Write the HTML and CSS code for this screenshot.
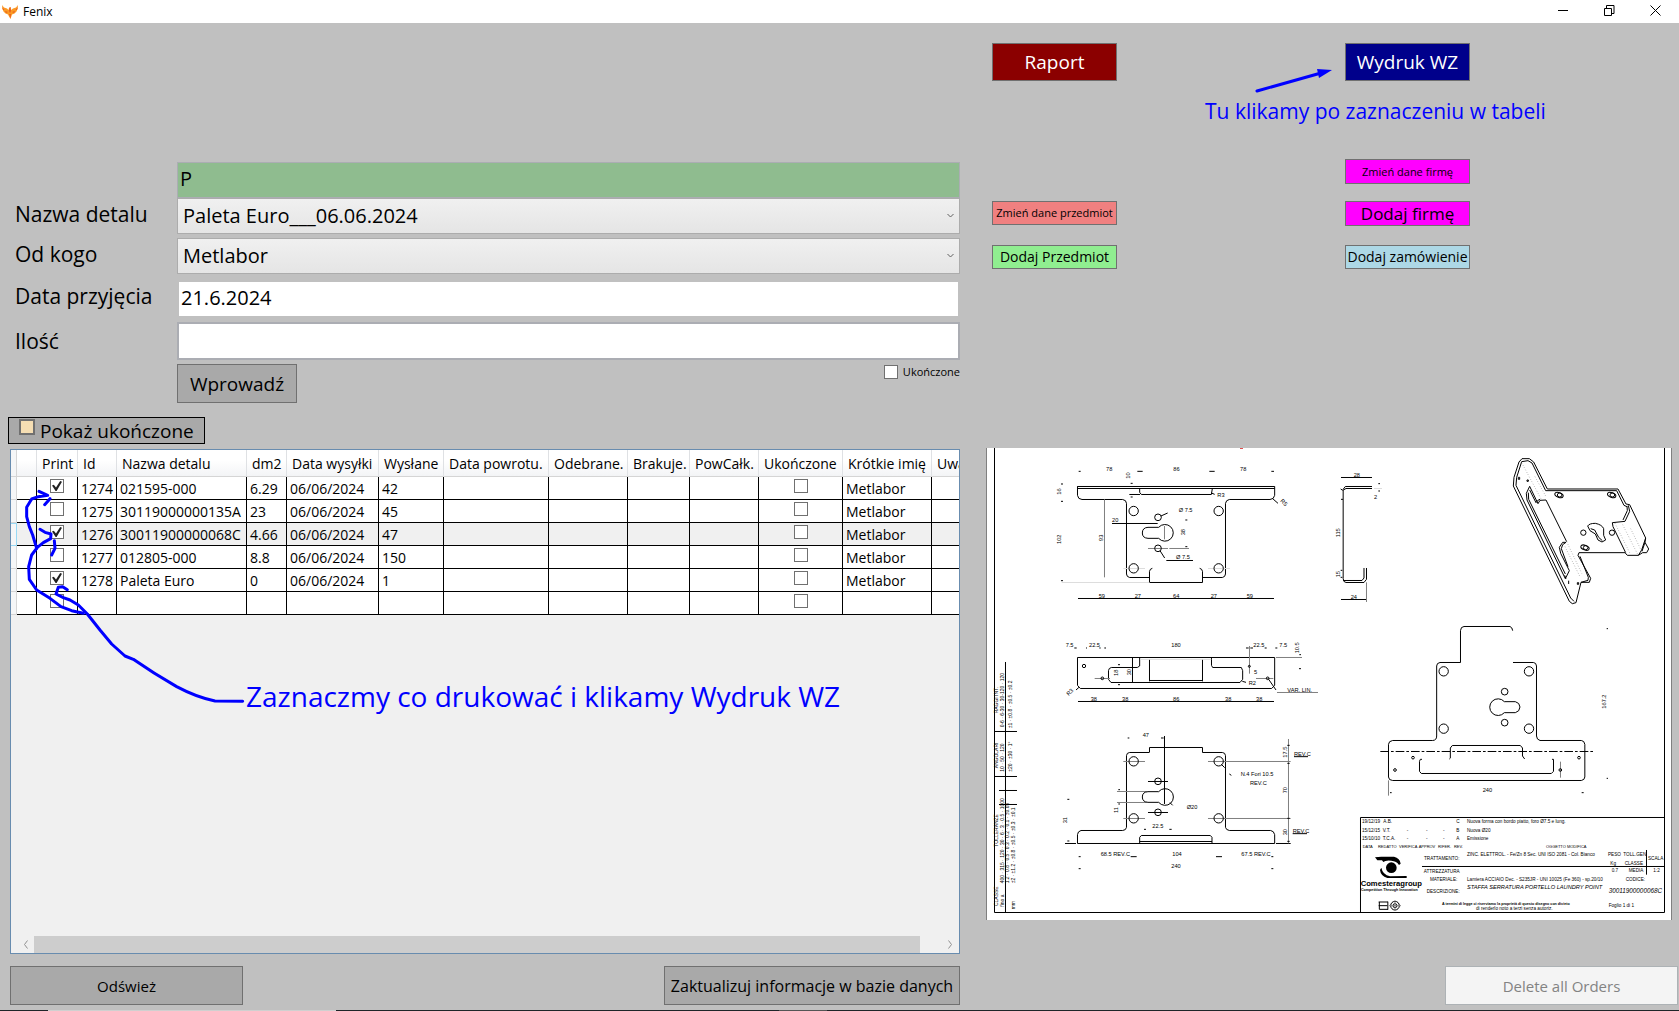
FILE: index.html
```html
<!DOCTYPE html>
<html lang="pl">
<head>
<meta charset="utf-8">
<title>Fenix</title>
<link rel="stylesheet" href="styles.css">
</head>
<body>
<header class="titlebar">
  <svg class="logo" viewBox="0 0 16 14" aria-hidden="true">
    <path fill="#fb9a24" d="M0 0L2 2.500 5 3.500 6.500 5 7 3 8.500 2 9 5 11 3.500 14 2.500 16 0 15.500 4 14.500 6.500 12.500 8.500 10 9.500 9.500 11 8.500 14 7 11.500 6 9.500 3.500 8.500 1.500 6.500.5 4z"/>
    <path fill="#ea5f1c" d="M0 2l2.500 3L1 5zM16 2l-2.500 3L15 5zM3 6l3 1-2 1zM13 6l-3 1 2 1zM7.500 2.500l1-.5.5 4-1 2-1-2zM7 9h2l-.5 4.500z"/>
  </svg>
  <span class="title">Fenix</span>
  <div class="winbuttons">
    <button class="win" aria-label="Minimalizuj"><svg viewBox="0 0 11 11"><path d="M0 5.500h10"/></svg></button>
    <button class="win" aria-label="Przywróć"><svg viewBox="0 0 11 11"><path d="M.5 3.500h7v7h-7zM2.500 3V.5h7.500v8h-2"/></svg></button>
    <button class="win" aria-label="Zamknij"><svg viewBox="0 0 11 11"><path d="M.5.5l10 10M10.500.5l-10 10"/></svg></button>
  </div>
</header>

<main class="content">
  <section class="left">
    <form class="form">
      <div class="pair">
        <div class="row"><span></span><input class="field search" aria-label="Szukaj" value="P"></div>
        <div class="row">
          <label for="detal">Nazwa detalu</label>
          <div class="combo"><select id="detal"><option>Paleta Euro___06.06.2024</option></select><svg viewBox="0 0 7 5"><path d="M.5 1l3 3 3-3"/></svg></div>
        </div>
      </div>
      <div class="row">
        <label for="firma">Od kogo</label>
        <div class="combo"><select id="firma"><option>Metlabor</option></select><svg viewBox="0 0 7 5"><path d="M.5 1l3 3 3-3"/></svg></div>
      </div>
      <div class="row received"><label for="data">Data przyjęcia</label><input class="field date" id="data" value="21.6.2024"></div>
      <div class="row quantity"><label for="ilosc">Ilość</label><input class="field amount" id="ilosc"></div>
      <div class="row">
        <span></span>
        <div class="submit">
          <button type="button" class="btn enter">Wprowadź</button>
          <label class="done"><input type="checkbox">Ukończone</label>
        </div>
      </div>
    </form>

    <label class="toggle"><input type="checkbox">Pokaż ukończone</label>

    <div class="gridbox">
      <div class="scroller">
        <table>
          <colgroup><col class="c6"><col class="c20"><col class="c41"><col class="c39"><col class="c130"><col class="c40"><col class="c92"><col class="c65"><col class="c105"><col class="c79"><col class="c62"><col class="c69"><col class="c84"><col class="c89"><col class="c79"></colgroup>
          <thead><tr><th class="rh"></th><th></th><th>Print</th><th>Id</th><th>Nazwa detalu</th><th>dm2</th><th>Data wysyłki</th><th>Wysłane</th><th>Data powrotu.</th><th>Odebrane.</th><th>Brakuje.</th><th>PowCałk.</th><th>Ukończone</th><th>Krótkie imię</th><th>Uwagi</th></tr></thead>
          <tbody>
            <tr><td class="rh"></td><td></td><td class="ck"><input type="checkbox" aria-label="Print 1274" checked></td><td>1274</td><td>021595-000</td><td>6.29</td><td>06/06/2024</td><td>42</td><td></td><td></td><td></td><td></td><td class="ck"><input type="checkbox" aria-label="Ukończone 1274"></td><td>Metlabor</td><td></td></tr>
            <tr><td class="rh"></td><td></td><td class="ck"><input type="checkbox" aria-label="Print 1275"></td><td>1275</td><td>30119000000135A</td><td>23</td><td>06/06/2024</td><td>45</td><td></td><td></td><td></td><td></td><td class="ck"><input type="checkbox" aria-label="Ukończone 1275"></td><td>Metlabor</td><td></td></tr>
            <tr class="current"><td class="rh"></td><td></td><td class="ck"><input type="checkbox" aria-label="Print 1276" checked></td><td>1276</td><td>30011900000068C</td><td>4.66</td><td>06/06/2024</td><td>47</td><td></td><td></td><td></td><td></td><td class="ck"><input type="checkbox" aria-label="Ukończone 1276"></td><td>Metlabor</td><td></td></tr>
            <tr><td class="rh"></td><td></td><td class="ck"><input type="checkbox" aria-label="Print 1277"></td><td>1277</td><td>012805-000</td><td>8.8</td><td>06/06/2024</td><td>150</td><td></td><td></td><td></td><td></td><td class="ck"><input type="checkbox" aria-label="Ukończone 1277"></td><td>Metlabor</td><td></td></tr>
            <tr><td class="rh"></td><td></td><td class="ck"><input type="checkbox" aria-label="Print 1278" checked></td><td>1278</td><td>Paleta Euro</td><td>0</td><td>06/06/2024</td><td>1</td><td></td><td></td><td></td><td></td><td class="ck"><input type="checkbox" aria-label="Ukończone 1278"></td><td>Metlabor</td><td></td></tr>
            <tr><td class="rh"></td><td></td><td class="ck"><input type="checkbox" aria-label="Print nowy"></td><td></td><td></td><td></td><td></td><td></td><td></td><td></td><td></td><td></td><td class="ck"><input type="checkbox" aria-label="Ukończone nowy"></td><td></td><td></td></tr>
          </tbody>
        </table>
      </div>
      <div class="scrollbar"><svg viewBox="0 0 5 9"><path d="M4.500.5l-3 4 3 4"/></svg><div class="thumb"></div><svg viewBox="0 0 5 9"><path d="M.5.5l3 4-3 4"/></svg></div>
      <svg class="scribble" viewBox="10 449 240 270" aria-hidden="true">
        <g transform="translate(0 300) scale(.33333)">
          <path d="M728 1204L645 1203Q590 1192 530 1160Q460 1120 400 1078L375 1068L335 1032L300 990L262 942L235 915L210 900L190 893L168 882L175 862L188 860L202 869"/>
          <path d="M250 940L215 932L183 920L150 895L110 870L88 838L86 800L95 765L112 742L130 728L152 716L153 702L135 697L120 688M163 722L165 745L155 765"/>
          <path d="M110 745L98 705L88 680L80 650L80 622L95 597L115 590L143 586L117 574M150 596L134 614"/>
        </g>
      </svg>
      <p class="note big">Zaznaczmy co drukować i klikamy Wydruk WZ</p>
    </div>

    <div class="footer">
      <button class="btn refresh">Odśwież</button>
      <button class="btn update">Zaktualizuj informacje w bazie danych</button>
    </div>
  </section>

  <section class="right">
    <div class="tools">
      <button class="tool raport">Raport</button>
      <button class="tool wydruk">Wydruk WZ</button>
      <button class="tool firm small">Zmień dane firmę</button>
      <button class="tool item small">Zmień dane przedmiot</button>
      <button class="tool firm large">Dodaj firmę</button>
      <button class="tool additem">Dodaj Przedmiot</button>
      <button class="tool order">Dodaj zamówienie</button>
      <svg class="arrow" viewBox="0 0 80 26" aria-hidden="true"><path d="M2 23L66 5" fill="none" stroke="#00f" stroke-width="3" stroke-linecap="round"/><path d="M62 1L77 2L64 10z" fill="#00f"/></svg>
      <p class="note">Tu klikamy po zaznaczeniu w tabeli</p>
    </div>

    <svg class="drawing" viewBox="986 448 686 472" role="img" aria-label="Rysunek techniczny">
      <rect x="986" y="448" width="686" height="472" fill="#fff"/>
      <path class="edge" d="M986.500 448V920M1671.500 448V920"/>
      <path d="M1240 448.500h3" stroke="#e05050"/>
      <path class="ln" d="M994.500 448V912.500H1664.500V448"/>

      <!-- top view -->
      <g class="d" transform="translate(980 440) scale(.33333)">
        <path d="M292 139.500H884M292 145.500H884M292.500 139V166Q294 178 306 178.500H428Q439 180 439.500 190V402Q440 411 449 412.500H508M884 139V166Q882 178 870 178.500H748Q738 180 736.500 190V402Q736 411 727 412.500H668M508 427.500H667.500V394Q666 386 659 385M508.500 427V394Q510 386 517 385M479 146V157L484 163.500H694L697 146"/>
        <path d="M294 475.500H882M396 250.500H533M559 361.500H639M448 163.500H480"/>
        <path d="M373.500 178V412M553.500 258V298M504 325.500H564M568 325.500H627" class="g"/>
        <path d="M245 427.500H508M430 385.500H495M684 385.500H750" class="l"/>
        <circle cx="461" cy="213" r="14"/><circle cx="716" cy="213" r="14"/><circle cx="461" cy="385" r="14"/><circle cx="716" cy="385" r="14"/><circle cx="534" cy="232" r="10"/><circle cx="534" cy="325" r="10"/>
        <path d="M536 262H504Q487 263 487 279Q487 294 504 295H536A25 25 0 1 0 536 262"/>
        <path d="M296 94h6M472 94h16M688 94h16M874 94h8M243 132h6M243 184h6M243 422h6M452 130h6M452 171h6M616 240h6M616 320h6M694 159l10 4M878 176l16 14M543 228l20-9M540 332l14 22"/>
        <g class="t"><text x="378" y="94">78</text><text x="580" y="94">86</text><text x="780" y="94">78</text><text x="712" y="170">R3</text><text x="596" y="217">Ø 7.5</text><text x="396" y="247">20</text><text x="588" y="358">Ø 7.5</text><text x="356" y="473">59</text><text x="464" y="473">27</text><text x="579" y="473">64</text><text x="692" y="473">27</text><text x="800" y="473">59</text>
        <text transform="translate(450 116) rotate(-90)">10</text><text transform="translate(243 164) rotate(-90)">16</text><text transform="translate(244 312) rotate(-90)">102</text><text transform="translate(370 303) rotate(-90)">93</text><text transform="translate(615 286) rotate(-90)">38</text><text transform="translate(900 184) rotate(45)">R5</text></g>

        <!-- side profile -->
        <path d="M292.500 736V652.500H884V736L875 745.500H301Z"/>
        <path d="M479 654V678L472 682.500H394Q386 684 385.500 692V718L393 727.500H780L788 718V692L784 682.500H698L694.500 676V654M508.500 658V724M667.500 658V724M508 721.500H667M457.500 653V727M294 784.500H882"/>
        <path class="g" d="M344 715.500H390M828 715.500H880M808.500 618V701M888 652.500H966M891 757.500H1014"/>
        <path class="l" d="M480 658H694"/>
        <circle cx="312" cy="678" r="5"/><circle cx="367" cy="715" r="4"/><circle cx="808" cy="679" r="3"/><circle cx="863" cy="715" r="4"/>
        <path d="M283 624h7M318 624h3M358 624h4M373 624h5M798 624h8M811 624h8M854 624h6M886 624h6M958 644h5M957 686h6M414 674h6M414 734h6M787 724l11 3M866 718l22 32M297 742l-9 8"/>
        <g class="t"><text x="257" y="622">7.5</text><text x="327" y="622">22.5</text><text x="574" y="622">180</text><text x="820" y="622">22.5</text><text x="898" y="622">7.5</text><text x="332" y="783">38</text><text x="426" y="783">38</text><text x="579" y="783">86</text><text x="735" y="783">38</text><text x="828" y="783">38</text><text x="922" y="755">VAR. LIN.</text><text x="822" y="702">5</text><text transform="translate(957 640) rotate(-90)">10.5</text><text transform="translate(414 708) rotate(-90)">18</text><text transform="translate(453 706) rotate(-90)">30</text><text transform="translate(266 768) rotate(-45)">R3</text><text x="806" y="736">R2</text></g>
      </g>

      <!-- bottom view and tolerance strip -->
      <g class="d" transform="translate(980 640) scale(.33333)">
        <path d="M76.500 66V816M43 274.500H111M43 409.500H111M57 451.500H111M57 493.500H111"/>
        <g class="t strip">
          <text transform="translate(54 220) rotate(-90)">RAGGI INT.</text><text transform="translate(54 385) rotate(-90)">ANGOLARI</text><text transform="translate(54 620) rotate(-90)">TOLLERANZE</text><text transform="translate(54 798) rotate(-90)">CLASSE</text>
          <text transform="translate(71 262) rotate(-90)">0-6 · 6-30 · 30-120 · 120</text><text transform="translate(97 265) rotate(-90)">±1 · ±0.8 · ±0.5 · ±0.2</text>
          <text transform="translate(71 395) rotate(-90)">10 · 50 · 120</text><text transform="translate(97 395) rotate(-90)">±20 · ±30 · 1°</text>
          <text transform="translate(71 730) rotate(-90)">400 · 315 · 120 · 30 · 6 · 3 · 0.5 · 1000</text><text transform="translate(88 730) rotate(-90)">1.2 · 0.8 · 0.5 · 0.3 · 0.2 · 0.1 · ±0.05</text><text transform="translate(105 730) rotate(-90)">±2 · ±1.2 · ±0.8 · ±0.5 · ±0.3 · ±0.1</text>
          <text transform="translate(71 800) rotate(-90)">fino a</text><text transform="translate(104 808) rotate(-90)">mm</text>
        </g>
        <path d="M508 337.500H449Q440 338 439.500 347V562Q438 571 428 571.500H303Q293 574 292.500 584V610.500H884V584Q882 573 872 571.500H748Q738 570 736.500 562V347Q736 338 727 337.500H667.500V322.500H508.500V337M479 610V592L484 586.500H691L696 592V610M479 604.500H696M553.500 288V492M504 424.500H564M504 517.500H564M255 610.500H288M888 610.500H932"/>
        <path class="g" d="M430 364.500H495M684 364.500H932M430 535.500H495M684 535.500H932M411 454.500H500M411 487.500H500M925.500 297V610"/>
        <circle cx="461" cy="364" r="14"/><circle cx="716" cy="364" r="14"/><circle cx="461" cy="535" r="14"/><circle cx="716" cy="535" r="14"/><circle cx="534" cy="424" r="10"/><circle cx="534" cy="517" r="10"/>
        <path d="M536 455H504Q487 456 487 471Q487 486 504 487H536A25 25 0 1 0 536 455M724 373l10 10M748 402l6 4M570 488l8 8"/>
        <path d="M443 294h5M543 294h8M415 449h5M415 492h5M262 478h6M262 603h6M492 568h6M568 568h7M296 650h6M452 650h18M708 650h18M874 650h6M296 686h6M874 686h6M942 350H984M938 581H981M922 316h7M922 370h7M922 535h7M922 604h7"/>
        <g class="t"><text x="488" y="291">47</text><text x="620" y="508">Ø20</text><text x="517" y="564">22.5</text><text x="362" y="648">68.5 REV.C</text><text x="577" y="648">104</text><text x="784" y="648">67.5 REV.C</text><text x="574" y="685">240</text><text x="942" y="348">REV.C</text><text x="938" y="580">REV.C</text><text x="782" y="408">N.4 Fori 10.5</text><text x="810" y="435">REV.C</text><text transform="translate(414 519) rotate(-90)">11</text><text transform="translate(262 550) rotate(-90)">31</text><text transform="translate(922 353) rotate(-90)">17.5</text><text transform="translate(922 460) rotate(-90)">70</text><text transform="translate(922 586) rotate(-90)">30</text></g>
      </g>

      <!-- profile, isometric view and flat pattern -->
      <g class="d" transform="translate(1320 440) scale(.33333)">
        <path d="M63 112.500H156M156 139.500H76L69.500 148V416Q70 427 78 427.500H132L139.500 418V384M156 145.500H78L70.500 150M70 421.500H126L132 414V384M63 478.500H139"/>
        <path class="g" d="M139.500 427V486"/><path class="l" d="M162 145.500H186"/>
        <path d="M175 131h5M175 153h5M63 178h6M62 391h5M62 412h5M62 147l6 4"/>
        <g class="t"><text x="101" y="110">28</text><text x="92" y="476">24</text><text x="162" y="176">2</text><text transform="translate(61 292) rotate(-90)">115</text><text transform="translate(61 412) rotate(-90)">15</text></g>

        <path d="M580 138L582 112L597 66L606 56L628 56L641 66L682 147H894L918 192L929 194L977 294L975 307L986 327L980 338H968L955 346H922L915 338H777L774 346L812 415L808 427H783L768 488L757 491L748 484L580 138"/>
        <path d="M588 136L590 112L605 65L624 62L636 69L677 152H890L912 196L921 200M588 136L752 474L762 484M780 349L805 412L804 421L783 427"/>
        <path d="M925 196L929 214L915 244L877 248L879 260L917 338M921 198L922 212L909 240M977 294L965 330L955 346M975 307L966 334"/>
        <path d="M629 139L619 160L621 180L736 416L748 392L722 340L718 322L728 307H738M629 139L654 191L660 181L678 180L740 305M625 158L626 178L736 402M738 307L728 314L724 326L744 380M629 150L648 188L655 180L660 178"/>
        <path class="dot" d="M605 68L665 180M645 110L677 168M740 305L785 400M735 320L780 410M885 250L930 340M908 254L953 343M932 266L965 334"/>
        <ellipse cx="717" cy="165" rx="13" ry="7" transform="rotate(20 717 165)"/><ellipse cx="719" cy="165" rx="7" ry="6"/><ellipse cx="875" cy="165" rx="13" ry="7" transform="rotate(20 875 165)"/><ellipse cx="877" cy="165" rx="7" ry="6"/><ellipse cx="795" cy="323" rx="13" ry="7" transform="rotate(20 795 323)"/><ellipse cx="797" cy="323" rx="7" ry="6"/><circle cx="790" cy="278" r="8"/><circle cx="876" cy="278" r="8"/>
        <path d="M803 258Q808 250 826 250Q846 254 851 266L851 286L857 300L846 306L834 300L826 282L810 272ZM812 266L824 270L836 292L847 302"/>
        <path d="M595 112h4v6h-4zM621 120h4v4h-4zM772 428h4v5h-4zM746 422v10M734 406l4 10"/>

        <path d="M421.500 667V572Q422 560 432 559.500H570Q577 562 578 572M422 667.500H360Q350 669 350 678V888Q350 901 338 901.500H218Q206 903 205.500 913V1011Q206 1021 218 1021.500H784Q794 1020 794.500 1011V913Q793 902 784 901.500H660Q650 899 649.500 888V678Q649 668 640 667.500H579"/>
        <path d="M391 954V924L397 916.500H601L607.500 924V948L614 957M391 955L388 957M301 958L298.500 964V994L304 1000.500H694L700.500 994V958H696M301 958H306"/>
        <path class="center" d="M181 934.500H819"/>
        <path class="g" d="M721.500 965V1013M205.500 1021V1067"/>
        <circle cx="371" cy="694" r="14"/><circle cx="627" cy="694" r="14"/><circle cx="371" cy="866" r="14"/><circle cx="627" cy="866" r="14"/><circle cx="554" cy="755" r="10"/><circle cx="554" cy="848" r="10"/><circle cx="279" cy="953" r="4"/><circle cx="777" cy="953" r="4"/><circle cx="225" cy="990" r="4"/><circle cx="721" cy="990" r="4"/>
        <path d="M553 785H586Q599 788 600 801Q599 815 586 818H553A25 25 0 1 1 553 785"/>
        <path d="M860 566h4M860 1015h4M210 1058h5M785 1058h6"/>
        <g class="t"><text x="488" y="1056">240</text><text transform="translate(858 806) rotate(-90)">167.2</text></g>
      </g>

      <!-- title block -->
      <g class="d" transform="translate(1350 800) scale(.33333)">
        <path d="M31.500 337V52.500H943M216 199.500H943M889.500 150V224"/>
        <path class="solid" d="M75 172L94 170H132Q150 174 152 191L147 195Q140 183 124 182Q106 180 100 186L96 181H82ZM94 203Q98 224 120 229L170 228V234H112Q92 228 90 210Z"/>
        <circle class="solid" cx="124" cy="203" r="16"/>
        <path d="M86 306h28M88 328h26M113.500 305V329M86 317H112M88 306V328"/><circle cx="135" cy="317" r="13"/><circle cx="135" cy="317" r="6"/><path class="g" d="M117 317H153M135 301V333"/>
        <g class="t block">
          <text class="b big" x="32" y="259">Comesteragroup</text><text class="b" x="33" y="272">Competition Through Innovation</text>
          <text x="36" y="70">19/12/19</text><text x="100" y="70">A.B.</text><text x="319" y="70">C</text><text x="351" y="70">Nuova forma con bordo piatto, foro Ø7.5 e lung.</text>
          <text x="36" y="95">15/12/15</text><text x="98" y="95">V.T.</text><text x="170" y="95">-</text><text x="228" y="95">-</text><text x="279" y="95">-</text><text x="319" y="95">B</text><text x="351" y="95">Nuova Ø20</text>
          <text x="36" y="119">15/10/10</text><text x="98" y="119">T.C.A.</text><text x="170" y="119">-</text><text x="228" y="119">-</text><text x="279" y="119">-</text><text x="319" y="119">A</text><text x="351" y="119">Emissione</text>
          <g class="heads"><text x="38" y="143">DATA</text><text x="84" y="143">REDATTO</text><text x="147" y="143">VERIFICA</text><text x="206" y="143">APPROV</text><text x="264" y="143">RIFER.</text><text x="312" y="143">REV.</text><text x="588" y="143">OGGETTO MODIFICA</text></g>
          <text x="222" y="180">TRATTAMENTO:</text><text x="351" y="168">ZINC. ELETTROL. - Fe/Zn 8 Sec. UNI ISO 2081 - Col. Bianco</text><text x="774" y="168">PESO</text><text x="820" y="168">TOLL.GEN</text><text x="781" y="194">Kg</text><text x="824" y="194">CLASSE</text><text x="894" y="180">SCALA</text>
          <text x="221" y="218">ATTREZZATURA</text><text x="785" y="216">0.7</text><text x="836" y="216">MEDIA</text><text x="910" y="216">1:2</text>
          <text x="240" y="242">MATERIALE:</text><text x="351" y="242">Lamiera ACCIAIO Dec. - S235JR - UNI 10025 (Fe 360) - sp.20/10</text><text x="827" y="242">CODICE:</text>
          <text x="230" y="278">DESCRIZIONE:</text><text class="i" x="351" y="266">STAFFA SERRATURA PORTELLO LAUNDRY POINT</text><text class="i code" x="776" y="280">30011900000068C</text>
          <text class="b" x="276" y="315">A termini di legge ci riserviamo la proprietà di questo disegno con divieto</text><text x="378" y="330">di renderlo noto a terzi senza autoriz.</text><text x="776" y="322">Foglio 1 di 1</text>
        </g>
      </g>
    </svg>

    <button class="delete" disabled>Delete all Orders</button>
  </section>
</main>
<div class="taskedge"></div>
</body>
</html>
```
FILE: styles.css
```css
* { box-sizing: border-box; }
body {
  margin: 0;
  min-height: 100vh;
  display: flex;
  flex-direction: column;
  background: #c0c0c0;
  color: #000;
  font: 14px/20px "Open Sans", "Noto Sans", sans-serif;
  overflow-x: hidden;
}
button, input, select { font: inherit; color: inherit; margin: 0; }
button { padding: 0; border-radius: 0; }

.titlebar { height: 23px; background: #fff; display: flex; align-items: center; padding-left: 2px; }
.logo { width: 16px; height: 14px; }
.title { margin-left: 5px; font-size: 12px; flex: 1; }
.winbuttons { display: flex; gap: 1px; align-self: flex-start; padding-right: 1px; }
.win { width: 45px; height: 20px; border: 0; background: none; display: grid; place-items: center; }
.win svg { width: 11px; height: 11px; fill: none; stroke: #000; }

.content { flex: 1; display: grid; grid-template-columns: 960fr 719fr; }
.left, .right { display: flex; flex-direction: column; min-width: 0; padding-bottom: 5px; }

.form { padding: 139px 0 0 15px; display: flex; flex-direction: column; gap: 4px; }
.row { display: grid; grid-template-columns: 162px 1fr; }
.row > label { font-size: 21px; line-height: 32px; }
.received { margin-top: 2px; }
.quantity > label { line-height: 38px; }
.field { width: 100%; height: 38px; padding: 0 2px 4px; font-size: 20px; background: #fff; border: 2px solid #abadb3; border-radius: 0; outline: 0; }
.search { height: 36px; border-width: 1px; background: #8fbc8f; }
.date { border-color: #c0c0c0; }
.combo { position: relative; }
.combo select { display: block; appearance: none; width: 100%; height: 36px; padding: 0 5px; font-size: 20px; line-height: 32px; border: 1px solid #acacac; border-radius: 0; background: linear-gradient(#f0f0f0, #e5e5e5); }
.combo svg { position: absolute; right: 6px; top: 15px; width: 7px; height: 5px; fill: none; stroke: #606060; }
.submit { display: flex; justify-content: space-between; align-items: flex-start; }
.btn { height: 39px; background: #a9a9a9; border: 1px solid #707070; }
.enter { width: 120px; font-size: 19px; }
.done { display: flex; align-items: center; gap: 5px; font-size: 11px; line-height: 14px; padding-top: 1px; }

input[type="checkbox"] { appearance: none; position: relative; width: 14px; height: 14px; background: #fff; border: 1px solid #707070; }
input[type="checkbox"]:checked::before { content: ""; position: absolute; inset: 1px; background: #212121; clip-path: polygon(0 45%, 18% 38%, 40% 65%, 82% 0, 100% 8%, 46% 100%, 36% 100%); }

.toggle { align-self: flex-start; display: flex; align-items: flex-start; gap: 5px; height: 27px; margin: 14px 0 5px 8px; padding: 0 10px; border: 1px solid #000; background: #a9a9a9; font-size: 19px; line-height: 26px; }
.toggle input[type="checkbox"] { width: 16px; height: 16px; margin-top: 1px; border: 2px solid #707070; background: #f5deb3; }

.gridbox { position: relative; flex: 1; margin-left: 10px; border: 1px solid #688caf; background: #f0f0f0; display: flex; flex-direction: column; }
.scroller { flex: 1; overflow: hidden; }
table { table-layout: fixed; width: 1000px; border-collapse: separate; border-spacing: 0; }
th { height: 27px; padding: 2px 0 0 5px; font-weight: 400; text-align: left; white-space: nowrap; background: linear-gradient(#fff 40%, #f3f4f6); border-right: 1px solid #dfe1e4; border-bottom: 1px solid #d5d5d5; }
td { height: 23px; padding: 1px 0 0 3px; line-height: 20px; white-space: nowrap; background: #fff; border-right: 1px solid #000; border-bottom: 1px solid #000; }
.current td { background: #f0f0f0; }
td.ck { padding: 2px 0 0; text-align: center; vertical-align: top; line-height: 0; }
th.rh, td.rh { padding: 0; background: #f5f6f7; border-color: #d5d5d5; }
.current td.rh { border: 1px solid #99d9f5; border-left: 0; }
.c6 { width: 6px; } .c20 { width: 20px; } .c41 { width: 41px; } .c39 { width: 39px; } .c130 { width: 130px; }
.c40 { width: 40px; } .c92 { width: 92px; } .c65 { width: 65px; } .c105 { width: 105px; } .c79 { width: 79px; }
.c62 { width: 62px; } .c69 { width: 69px; } .c84 { width: 84px; } .c89 { width: 89px; }

.scrollbar { height: 17px; display: flex; align-items: center; padding: 0 6px 0 12px; }
.scrollbar svg { width: 5px; height: 9px; fill: none; stroke: #909090; }
.thumb { flex: 1; height: 17px; margin: 0 28px 0 6px; background: #cdcdcd; }

.scribble { position: absolute; left: -1px; top: -1px; width: 240px; height: 270px; fill: none; stroke: #00f; stroke-width: 9; stroke-linejoin: round; stroke-linecap: round; }
.note { position: absolute; margin: 0; color: #00f; white-space: nowrap; font-size: 21px; line-height: 28px; }
.note.big { left: 235px; top: 226px; font-size: 28px; line-height: 40px; }

.footer { display: flex; justify-content: space-between; margin: 12px 0 0 10px; }
.refresh { width: 233px; font-size: 15px; }
.update { width: 296px; font-size: 16px; white-space: nowrap; }

.tools { position: relative; height: 425px; padding: 20px 0 0 32px; display: grid; grid-template-columns: 353fr 334fr; grid-template-rows: 116px 42px 44px 25px; align-items: start; }
.tool { width: 125px; height: 24px; border: 1px solid #707070; font-size: 14px; line-height: 20px; white-space: nowrap; overflow: hidden; display: flex; justify-content: center; align-items: center; }
.raport, .wydruk { height: 38px; font-size: 19px; color: #fff; }
.raport { background: #8b0000; }
.wydruk { background: #00008b; }
.firm { background: #f0f; grid-column: 2; height: 25px; }
.small { font-size: 11px; }
.large { font-size: 17px; }
.item { background: #f08080; }
.item, .large { grid-row: 3; }
.additem { background: #90ee90; }
.order { background: #add8e6; }
.arrow { position: absolute; left: 295px; top: 45px; width: 80px; height: 26px; }
.tools .note { left: 245px; top: 74px; }

.drawing { display: block; margin: 0 7px 0 26px; fill: none; stroke-width: 1; }
.drawing .edge { stroke: #808080; }
.drawing .ln { stroke: #000; }
.d { stroke: #000; stroke-width: 3; }
.d .g { stroke: #808080; }
.d .l { stroke: #ddd; }
.d .dot { stroke-width: 2; stroke-dasharray: 2 6; stroke: #666; }
.d .center { stroke-dasharray: 26 6 8 6; }
.d .solid { fill: #000; stroke: none; }
.t { fill: #000; stroke: none; font: 17px "Liberation Sans", Arial, sans-serif; }
.strip { font-size: 15px; }
.block { font-size: 14px; }
.heads { font-size: 12px; }
.t .b { font-weight: 700; font-size: 11px; }
.t .big { font-size: 23px; }
.t .i { font-style: italic; font-size: 17px; }
.t .code { font-size: 19px; }

.delete { align-self: flex-end; width: 233px; height: 39px; margin: auto 1px 0 0; background: #f4f4f4; border: 1px solid #adb2b5; color: #838383; font-size: 15px; }
.taskedge { height: 1px; background: linear-gradient(90deg, #1f2428 48px, #d0d0d0 48px 336px, #1f2428 336px 779px, #555 779px 827px, #1f2428 827px); }
```
